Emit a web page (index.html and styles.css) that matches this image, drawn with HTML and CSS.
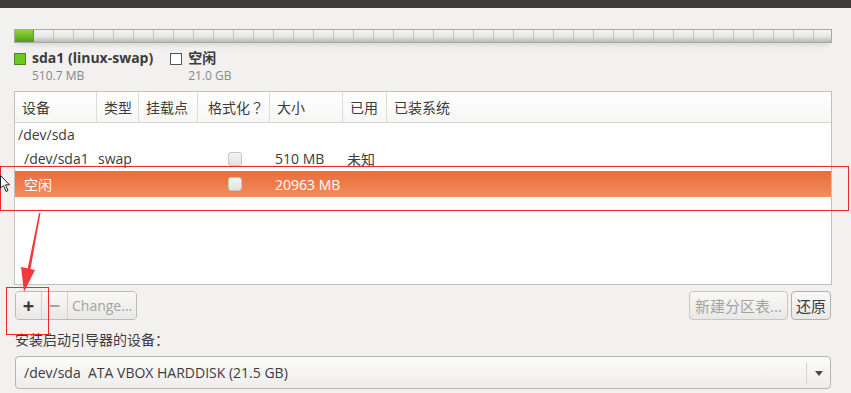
FILE: index.html
```html
<!DOCTYPE html>
<html lang="zh-CN">
<head>
    <meta charset="UTF-8">
    <title>安装类型</title>
    <link rel="stylesheet" href="styles.css">
</head>
<body>
    <div class="topbar"></div>

    <div class="page">
        <div class="part-bar">
            <div class="part-used"></div>
            <div class="part-free"></div>
        </div>

        <div class="legend">
            <div class="legend-item">
                <span class="swatch swap"></span>
                <div>
                    <div class="legend-name">sda1 (linux-swap)</div>
                    <div class="legend-size">510.7 MB</div>
                </div>
            </div>
            <div class="legend-item">
                <span class="swatch free"></span>
                <div>
                    <div class="legend-name">空闲</div>
                    <div class="legend-size">21.0 GB</div>
                </div>
            </div>
        </div>

        <div class="part-table">
            <div class="row head">
                <div class="c c-dev">设备</div>
                <div class="c c-type">类型</div>
                <div class="c c-mount">挂载点</div>
                <div class="c c-fmt">格式化<span class="punct">？</span></div>
                <div class="c c-size">大小</div>
                <div class="c c-used">已用</div>
                <div class="c c-os">已装系统</div>
            </div>
            <div class="row disk">
                <div class="c">/dev/sda</div>
            </div>
            <div class="row">
                <div class="c c-dev sub">/dev/sda1</div>
                <div class="c c-type">swap</div>
                <div class="c c-mount"></div>
                <div class="c c-fmt"><span class="check"></span></div>
                <div class="c c-size">510 MB</div>
                <div class="c c-used">未知</div>
                <div class="c c-os"></div>
            </div>
            <div class="row selected">
                <div class="c c-dev sub">空闲</div>
                <div class="c c-type"></div>
                <div class="c c-mount"></div>
                <div class="c c-fmt"><span class="check"></span></div>
                <div class="c c-size">20963 MB</div>
                <div class="c c-used"></div>
                <div class="c c-os"></div>
            </div>
        </div>

        <div class="toolbar">
            <div class="btn-group">
                <button class="btn icon-btn">+</button>
                <button class="btn icon-btn dim">−</button>
                <button class="btn dim">Change...</button>
            </div>
            <div class="btn-right">
                <button class="btn single dim">新建分区表...</button>
                <button class="btn single">还原</button>
            </div>
        </div>

        <div class="boot-label">安装启动引导器的设备<span class="punct">：</span></div>
        <div class="combo">
            <span>/dev/sda&nbsp;&nbsp;ATA VBOX HARDDISK (21.5 GB)</span>
            <span class="combo-arrow"></span>
        </div>
    </div>

    <!-- annotations drawn on top of the screenshot -->
    <svg class="marks" width="851" height="393" viewBox="0 0 851 393">
        <rect x="0.5" y="166.5" width="848" height="44" fill="none" stroke="#f0282c" stroke-width="1"/>
        <rect x="6.5" y="287.5" width="42" height="47" fill="none" stroke="#f0282c" stroke-width="1"/>
        <path d="M40.5 213 L39 213 L27 272 L30 272 Z" fill="#f23a3c"/>
        <path d="M21 267 L35 270 L24 292 Z" fill="#f23a3c"/>
    </svg>

    <svg class="cursor" width="10" height="18" viewBox="0 0 10 18">
        <path d="M0.5 0.5 L0.5 13 L3.5 10.5 L6 16.5 L8 15.5 L5.5 9.8 L9.5 9.8 Z" fill="#fff" stroke="#222" stroke-width="1"/>
    </svg>
</body>
</html>
```

FILE: styles.css
```css
* {
    margin: 0;
    padding: 0;
    box-sizing: border-box;
}

body {
    width: 851px;
    height: 393px;
    overflow: hidden;
    background: #f2f1f0;
    font-family: "Open Sans", "Noto Sans CJK SC", sans-serif;
    font-size: 14px;
    color: #3c3c3c;
    position: relative;
}

/* centred full-width punctuation */
.punct {
    font-family: "Noto Sans CJK TC", sans-serif;
}

.topbar {
    height: 8px;
    background: #3c3b37;
}

.page {
    padding: 0 19px 0 14px;
}

/* partition bar */
.part-bar {
    margin-top: 21px;
    height: 14px;
    width: 818px;
    display: flex;
    border: 1px solid #a9a8a6;
    box-shadow: 0 5px 5px -3px rgba(0, 0, 0, 0.12);
}

.part-used {
    width: 19px;
    background: linear-gradient(#8fd43f, #6cb728 60%, #4f9a17);
    border-right: 1px solid #5d9a2a;
}

.part-free {
    flex: 1;
    background:
        repeating-linear-gradient(90deg, transparent 0 19px, #c4c3c1 19px 20px),
        linear-gradient(#f4f4f3, #e6e6e5 55%, #b9b8b7);
}

.legend {
    display: flex;
    gap: 17px;
    margin-top: 6px;
}

.legend-item {
    display: flex;
    gap: 6px;
}

.swatch {
    width: 12px;
    height: 12px;
    margin-top: 4px;
}

.swatch.swap {
    background: #6fc721;
    border: 1px solid #4a8a16;
}

.swatch.free {
    border: 1px solid #555;
    background: #fff;
}

.legend-name {
    font-weight: bold;
    font-size: 14px;
    color: #3c3c3c;
    line-height: 18px;
}

.legend-size {
    margin-top: 2px;
    font-size: 12px;
    color: #8a8886;
    line-height: 14px;
}

/* partition table */
.part-table {
    margin-top: 8px;
    width: 818px;
    height: 194px;
    background: #fff;
    border: 1px solid #c3c1be;
}

.row {
    display: flex;
    height: 25px;
    align-items: center;
}

.row.head {
    height: 31px;
    background: linear-gradient(#fff, #f6f6f5);
    border-bottom: 1px solid #d6d4d1;
    align-items: stretch;
}

.row.head .c {
    display: flex;
    align-items: center;
    padding-left: 7px;
    border-right: 1px solid #dedcd9;
}

.row.head .c-fmt {
    padding-left: 5px;
}

.row.head .c-os {
    border-right: none;
}

.row.disk {
    height: 23px;
    padding-left: 3px;
}

.row.selected {
    height: 26px;
    background: linear-gradient(#e96d39, #f48c5c);
    color: #fff;
}

.c {
    white-space: nowrap;
}

.c-dev { width: 82px; }
.c-type { width: 42px; }
.c-mount { width: 59px; }
.c-fmt { width: 72px; }
.c-size { width: 73px; }
.c-used { width: 44px; }
.c-os { flex: 1; }

.row .sub { padding-left: 9px; }
.row .c-type { padding-left: 1px; }
.row .c-size { padding-left: 5px; }
.row .c-used { padding-left: 4px; }

.c-fmt {
    display: flex;
    justify-content: center;
}

.check {
    width: 14px;
    height: 14px;
    border: 1px solid #c7c6c4;
    border-radius: 3px;
    background: linear-gradient(#f4f4f3, #e4e3e2);
    margin-left: 1px;
}

/* buttons */
.toolbar {
    display: flex;
    justify-content: space-between;
    margin-top: 6px;
    width: 817px;
    padding-left: 1px;
}

.btn {
    height: 29px;
    font-family: inherit;
    font-size: 14px;
    color: #3c3c3c;
    background: linear-gradient(#f8f8f7, #e9e8e7);
    border: none;
    padding: 0 4px;
}

.btn.dim {
    color: #a5a3a0;
}

.btn-group {
    display: flex;
    border: 1px solid #bdbbb8;
    border-radius: 4px;
    overflow: hidden;
}

.btn-group .btn {
    height: 27px;
    border-right: 1px solid #d3d1ce;
}

.btn-group .btn:last-child {
    border-right: none;
}

.icon-btn {
    width: 26px;
    font-size: 20px;
    font-weight: bold;
    padding: 0;
}

.btn-right {
    display: flex;
    gap: 3px;
}

.btn.single {
    border: 1px solid #b3b1ae;
    border-radius: 4px;
    font-size: 15px;
}

.btn.single.dim {
    border-color: #c9c7c4;
    width: 99px;
}

.boot-label {
    margin-top: 8px;
    padding-left: 1px;
    font-size: 14px;
    line-height: 22px;
    color: #3c3c3c;
}

.combo {
    margin-top: 5px;
    margin-left: 1px;
    width: 816px;
    height: 33px;
    border: 1px solid #b8b6b3;
    border-radius: 4px;
    background: linear-gradient(#fbfbfa, #eeedec);
    display: flex;
    align-items: center;
    justify-content: space-between;
    padding-left: 8px;
    font-size: 14px;
}

.combo-arrow {
    width: 24px;
    height: 22px;
    border-left: 1px solid #d6d4d1;
    position: relative;
}

.combo-arrow::after {
    content: "";
    position: absolute;
    left: 8px;
    top: 9px;
    border-left: 4px solid transparent;
    border-right: 4px solid transparent;
    border-top: 5px solid #4a4a4a;
}

/* overlays */
.marks {
    position: absolute;
    left: 0;
    top: 0;
}

.cursor {
    position: absolute;
    left: 0;
    top: 175px;
}
```
